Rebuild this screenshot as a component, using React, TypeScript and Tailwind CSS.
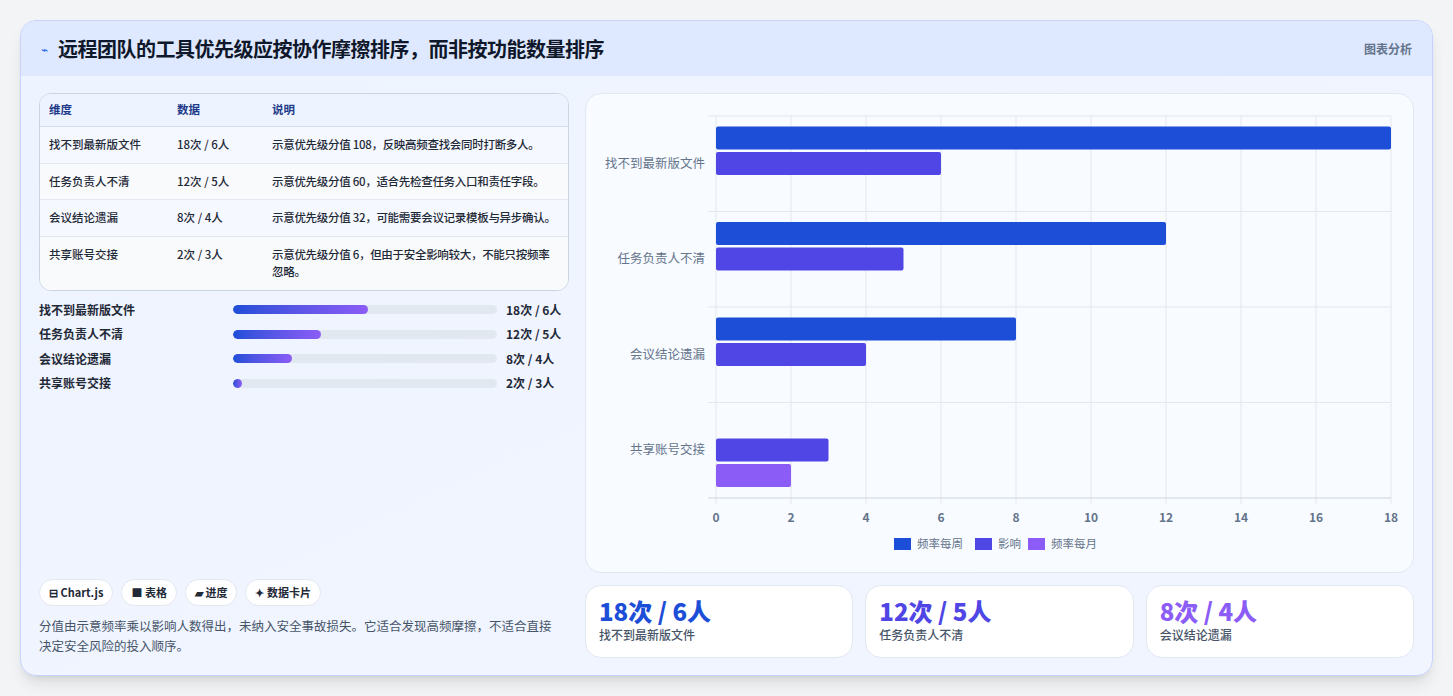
import React from "react";

const rows = [
  ["找不到最新版文件", "18次 / 6人", "示意优先级分值 108，反映高频查找会同时打断多人。"],
  ["任务负责人不清", "12次 / 5人", "示意优先级分值 60，适合先检查任务入口和责任字段。"],
  ["会议结论遗漏", "8次 / 4人", "示意优先级分值 32，可能需要会议记录模板与异步确认。"],
  ["共享账号交接", "2次 / 3人", "示意优先级分值 6，但由于安全影响较大，不能只按频率忽略。"],
];
const bars = [51, 33.5, 22.5, 3.5];

function Chart() {
  const x0 = 130, unit = 37.5, top = 22, ch = 95.5;
  const cats = ["找不到最新版文件", "任务负责人不清", "会议结论遗漏", "共享账号交接"];
  const data: (number | null)[][] = [
    [18, 12, 8, null],
    [6, 5, 4, 3],
    [null, null, null, 2],
  ];
  const colors = ["#1d4ed8", "#4f46e5", "#8b5cf6"];
  return (
    <svg width="828" height="479" className="block">
      {Array.from({ length: 10 }).map((_, i) => (
        <g key={i}>
          <line x1={x0 + i * 75} x2={x0 + i * 75} y1={top} y2={404} stroke="#e5e7eb" />
          <line x1={x0 + i * 75} x2={x0 + i * 75} y1={404} y2={410} stroke="#e5e7eb" />
          <text x={x0 + i * 75} y={428} textAnchor="middle" fontSize="12" fontWeight="600" fill="#64748b">{i * 2}</text>
        </g>
      ))}
      {[0, 1, 2, 3, 4].map((i) => (
        <line key={i} x1={x0 - 8} x2={805} y1={top + i * ch} y2={top + i * ch} stroke={i === 4 ? "#cbd5e1" : "#e5e7eb"} />
      ))}
      {cats.map((c, i) => (
        <text key={c} x={119} y={top + i * ch + ch / 2 + 4} textAnchor="end" fontSize="12.5" fill="#64748b">{c}</text>
      ))}
      {data.map((ds, d) =>
        ds.map((v, i) =>
          v == null ? null : (
            <rect key={d + "-" + i} x={x0} y={top + i * ch + 9.5 + d * 25.5 + 1} width={v * unit} height={23} rx="2" fill={colors[d]} />
          )
        )
      )}
      {[["频率每周", 308], ["影响", 389], ["频率每月", 442]].map(([l, x], i) => (
        <g key={l as string}>
          <rect x={x as number} y={444} width={17} height={12} fill={colors[i]} />
          <text x={(x as number) + 23} y={454} fontSize="11.5" fill="#64748b">{l}</text>
        </g>
      ))}
    </svg>
  );
}

export default function App() {
  return (
    <div className="w-[1453px] h-[696px] bg-[#f3f4f6] pt-5 px-5" style={{ fontFamily: '"Noto Sans CJK SC", "Noto Sans", sans-serif' }}>
      <div className="w-[1413px] h-[656px] rounded-2xl border border-[#c7d2fe] overflow-hidden bg-gradient-to-br from-[#eef4ff] to-[#f1f5ff] shadow-lg">
        <div className="h-[55px] bg-[#dee8fe] flex items-center justify-between px-5">
          <div className="flex items-center gap-2.5">
            <span className="text-[#2563eb] text-xs">⌁</span>
            <span className="text-[20px] font-bold text-[#0f172a] tracking-[-0.5px]">远程团队的工具优先级应按协作摩擦排序，而非按功能数量排序</span>
          </div>
          <span className="text-xs font-semibold text-[#64748b]">图表分析</span>
        </div>
        <div className="flex gap-4 px-[18px] pt-[17px]">
          <div className="w-[531px] flex flex-col h-[563px]">
            <div className="rounded-xl border border-[#cbd5e1] overflow-hidden bg-[#f8faff] text-[11.5px]">
              <div className="flex h-[33px] items-center bg-[#eef4ff] border-b border-[#d5dcea] font-semibold text-[#1e3a8a]">
                <div className="w-[137px] pl-[9px]">维度</div>
                <div className="w-[95px]">数据</div>
                <div>说明</div>
              </div>
              {rows.map((r, i) => (
                <div key={i} className={`flex py-[9px] leading-[17.5px] text-[#1f2937] font-medium ${i < 3 ? "border-b border-[#e2e8f0]" : ""} ${i % 2 ? "bg-[#f8fafc]" : "bg-[#f5f8ff]"}`}>
                  <div className="w-[137px] pl-[9px] shrink-0">{r[0]}</div>
                  <div className="w-[95px] shrink-0">{r[1]}</div>
                  <div className="pr-3 tracking-[-0.3px]">{r[2]}</div>
                </div>
              ))}
            </div>
            <div className="mt-[10px] flex flex-col gap-[6px] text-xs font-semibold text-[#1f2937]">
              {rows.map((r, i) => (
                <div key={i} className="flex items-center h-[18.5px]">
                  <div className="w-[194px]">{r[0]}</div>
                  <div className="w-[264px] h-[9px] rounded-full bg-[#e2e8f0] overflow-hidden">
                    <div className="h-full rounded-full bg-gradient-to-r from-[#1d4ed8] to-[#8b5cf6]" style={{ width: bars[i] + "%" }} />
                  </div>
                  <div className="ml-[9px]">{r[1]}</div>
                </div>
              ))}
            </div>
            <div className="mt-auto flex gap-2 text-[11px] font-semibold text-[#1f2937]">
              {["⊟ Chart.js", "■ 表格", "▰ 进度", "✦ 数据卡片"].map((c) => (
                <span key={c} className="h-[27px] px-[9px] flex items-center rounded-full bg-white border border-[#e2e8f0]">{c}</span>
              ))}
            </div>
            <p className="mt-[10px] mb-0 text-[12.5px] leading-[20px] text-[#475569] pr-2">分值由示意频率乘以影响人数得出，未纳入安全事故损失。它适合发现高频摩擦，不适合直接决定安全风险的投入顺序。</p>
          </div>
          <div className="w-[829px] flex flex-col gap-3">
            <div className="h-[480px] rounded-2xl bg-[#f8fbff] border border-[#e2e8f0]">
              <Chart />
            </div>
            <div className="grid grid-cols-3 gap-3">
              {[
                ["18次 / 6人", "找不到最新版文件", "text-[#1d4ed8]"],
                ["12次 / 5人", "任务负责人不清", "text-[#4f46e5]"],
                ["8次 / 4人", "会议结论遗漏", "text-[#8b5cf6]"],
              ].map(([v, l, c]) => (
                <div key={l} className="h-[73px] rounded-2xl bg-white border border-[#e2e8f0] px-[13px] pt-[9px]">
                  <div className={`text-[24px] font-extrabold leading-[32px] ${c}`}>{v}</div>
                  <div className="text-xs text-[#475569] font-medium">{l}</div>
                </div>
              ))}
            </div>
          </div>
        </div>
      </div>
    </div>
  );
}
